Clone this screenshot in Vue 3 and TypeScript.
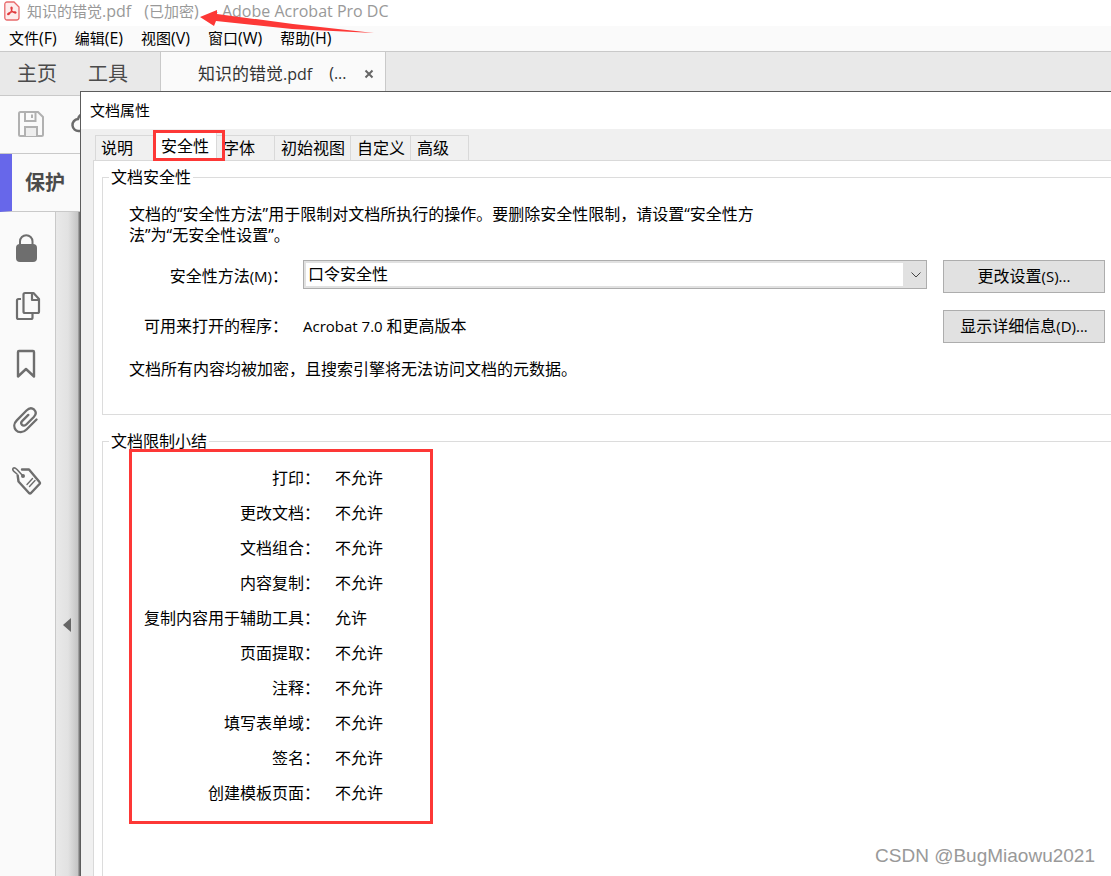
<script setup lang="ts">
import { ref } from 'vue'

interface Restriction {
  label: string
  value: string
}

const menus = [
  { text: '文件', key: '(F)' },
  { text: '编辑', key: '(E)' },
  { text: '视图', key: '(V)' },
  { text: '窗口', key: '(W)' },
  { text: '帮助', key: '(H)' },
]

const tabs = [
  { text: '说明', size: 'first' },
  { text: '安全性', size: 'active' },
  { text: '字体', size: 'mid' },
  { text: '初始视图', size: 'wide' },
  { text: '自定义', size: 'custom' },
  { text: '高级', size: 'mid' },
]

const restrictions: Restriction[] = [
  { label: '打印', value: '不允许' },
  { label: '更改文档', value: '不允许' },
  { label: '文档组合', value: '不允许' },
  { label: '内容复制', value: '不允许' },
  { label: '复制内容用于辅助工具', value: '允许' },
  { label: '页面提取', value: '不允许' },
  { label: '注释', value: '不允许' },
  { label: '填写表单域', value: '不允许' },
  { label: '签名', value: '不允许' },
  { label: '创建模板页面', value: '不允许' },
]

const method = ref('口令安全性')
</script>

<template>
  <div class="window">
    <header class="titlebar">
      <svg class="logo" width="16" height="20" viewBox="0 0 16 20" aria-hidden="true">
        <path d="M3 1h7l5 5v10.500a2.500 2.500 0 0 1-2.500 2.500h-9.500a2.200 2.200 0 0 1-2.200-2.200V3.200A2.200 2.200 0 0 1 3 1z" fill="#fdecec" stroke="#e8696b" stroke-width="1.300" />
        <path d="M7.500 6c1 0 .8 1.600.2 3C6.800 11.200 5.300 13.600 4 13.700c-1.200-.3.200-1.700 1.900-2.300 2-.6 4.200-.8 5.500-.5 1.200.5.600 1.500-.6 1.100C9.300 11.500 7.300 9.500 7 7.500 6.900 6.600 7 6 7.500 6z" fill="none" stroke="#e0383b" stroke-width="1.100" stroke-linejoin="round" />
      </svg>
      <span class="title-name">知识的错觉<span class="title-latin">.pdf</span></span>
      <span class="title-state"><span class="title-latin">(</span>已加密<span class="title-latin">)</span></span>
      <span class="title-latin title-app">- Adobe Acrobat Pro DC</span>
    </header>
    <svg class="arrow" width="180" height="30" viewBox="0 0 180 30" aria-hidden="true">
      <path d="M3 10L20 3v4l76 10 81 9-82-4-76-8-2 5z" fill="#fd3836" />
    </svg>

    <nav class="menubar">
      <button v-for="m in menus" :key="m.text" type="button">{{ m.text }}<span class="menu-key">{{ m.key }}</span></button>
    </nav>

    <div class="docbar">
      <button type="button" class="home">主页</button>
      <button type="button" class="home">工具</button>
      <div class="doctab">
        <span class="doc-name">知识的错觉<span class="doc-latin">.pdf</span></span>
        <span class="doc-latin doc-more">(...</span>
        <button type="button" class="close" aria-label="关闭">
          <svg width="10" height="10" viewBox="0 0 10 10"><path d="M1.500 1.500l7 7m0-7l-7 7" stroke="#666" stroke-width="2" /></svg>
        </button>
      </div>
    </div>

    <div class="toolbar">
      <button type="button" aria-label="保存">
        <svg width="28" height="28" viewBox="0 0 28 28" fill="none" stroke="#b1b1b1" stroke-width="2">
          <path d="M3.500 2h17.500l5 5v17.500a1.500 1.500 0 0 1-1.500 1.500h-21a1.500 1.500 0 0 1-1.500-1.500v-21a1.500 1.500 0 0 1 1.500-1.500z" />
          <path d="M8 2v9h10.500V2M15 4.500v3.500" />
          <path d="M8 26v-9h12v9" fill="#eeeeee" />
        </svg>
      </button>
      <button type="button" aria-label="云">
        <svg width="32" height="28" viewBox="0 0 32 28" fill="none" stroke="#6b6b6b" stroke-width="2.500">
          <path d="M10 21H8a6 6 0 0 1-1-12 8 8 0 0 1 15-1 7 7 0 0 1 3 13z" />
        </svg>
      </button>
    </div>

    <div class="protect">保护</div>

    <div class="workspace">
      <aside class="rail">
        <button type="button" aria-label="安全性">
          <svg width="32" height="32" viewBox="0 0 32 32">
            <rect x="6" y="12" width="21" height="18" rx="4" fill="#6e6e6e" />
            <path d="M10 14V9.500a6.200 6.200 0 0 1 12.500 0V14" fill="none" stroke="#6e6e6e" stroke-width="2" />
          </svg>
        </button>
        <button type="button" aria-label="页面">
          <svg width="32" height="32" viewBox="0 0 32 32" fill="none" stroke="#6e6e6e" stroke-width="2.200" stroke-linejoin="round">
            <path d="M11 9H8.500A1.500 1.500 0 0 0 7 10.500V27.500A1.500 1.500 0 0 0 8.500 29H21a1.500 1.500 0 0 0 1.500-1.500V24" />
            <path d="M15 3h8.500l5.500 6v12.500a1.500 1.500 0 0 1-1.500 1.500H15a1.500 1.500 0 0 1-1.500-1.500v-17A1.500 1.500 0 0 1 15 3z" />
            <path d="M22 3v7h7" />
          </svg>
        </button>
        <button type="button" aria-label="书签">
          <svg width="32" height="32" viewBox="0 0 32 32" fill="none" stroke="#6e6e6e" stroke-width="2.400" stroke-linejoin="round">
            <path d="M9 3h14a1 1 0 0 1 1 1v24.500l-8-7.500-8 7.500V4a1 1 0 0 1 1-1z" />
          </svg>
        </button>
        <button type="button" aria-label="附件">
          <svg width="32" height="32" viewBox="0 0 32 32" fill="none" stroke="#6e6e6e" stroke-width="2.300" stroke-linecap="round">
            <path d="M26.500 13.500L16.500 23.500C13 27 8.500 27 6 24.200c-2.600-3-2-7 .8-9.800L16.500 4.500c2.500-2.500 5.500-2.800 7.700-.8 2.200 2.200 1.800 5-.4 7.300l-7.500 7.500c-1.400 1.400-3.200 1.500-4.300.4-1.200-1.200-1-2.700.3-4l6-6" />
          </svg>
        </button>
        <button type="button" aria-label="标签">
          <svg width="32" height="32" viewBox="0 0 32 32" fill="none" stroke="#6e6e6e" stroke-width="2" stroke-linejoin="round" stroke-linecap="round">
            <path d="M12 5.500h7l10.500 12.500a1.500 1.500 0 0 1 0 2L21 29a1.500 1.500 0 0 1-2 0L8.500 17.500l-.8-6" stroke-width="2.400" />
            <path d="M13 12L7 5.500C5.500 4 4 3.500 3.200 4.200c-.8.8-.2 2.300 1 3.500L7 10" stroke-width="1.600" />
            <circle cx="13" cy="12" r="1" />
            <path d="M17 20.500l5.500-6M19.500 22.500l5.500-6" stroke-width="1.400" />
          </svg>
        </button>
      </aside>
      <div class="gutter">
        <button type="button" aria-label="折叠"></button>
      </div>
    </div>

    <section class="dialog" role="dialog" aria-labelledby="dialog-title">
      <h1 id="dialog-title">文档属性</h1>
      <div class="dialog-body">
        <div class="tabs" role="tablist">
          <button v-for="t in tabs" :key="t.text" type="button" role="tab" :aria-selected="t.size === 'active'" :class="['tab', t.size]">{{ t.text }}</button>
          <div class="mark-tab"></div>
        </div>
        <div class="panel">
          <fieldset class="group security">
            <legend>文档安全性</legend>
            <p class="intro">文档的“安全性方法”用于限制对文档所执行的操作。要删除安全性限制，请设置“安全性方法”为“无安全性设置”。</p>
            <div class="row">
              <label class="name" for="method">安全性方法<span class="latin">(M)</span>：</label>
              <div class="select">
                <select id="method" v-model="method">
                  <option>口令安全性</option>
                  <option>无安全性设置</option>
                </select>
                <svg width="10" height="6" viewBox="0 0 10 6" aria-hidden="true"><path d="M.5.5L5 5 9.500.5" fill="none" stroke="#444" /></svg>
              </div>
              <button type="button" class="push">更改设置<span class="latin">(S)...</span></button>
            </div>
            <div class="row">
              <span class="name">可用来打开的程序：</span>
              <span class="value"><span class="latin">Acrobat 7.0 </span>和更高版本</span>
              <button type="button" class="push">显示详细信息<span class="latin">(D)...</span></button>
            </div>
            <p class="note">文档所有内容均被加密，且搜索引擎将无法访问文档的元数据。</p>
          </fieldset>
          <fieldset class="group summary">
            <legend>文档限制小结</legend>
            <dl>
              <template v-for="r in restrictions" :key="r.label">
                <dt>{{ r.label }}：</dt>
                <dd>{{ r.value }}</dd>
              </template>
            </dl>
          </fieldset>
        </div>
      </div>
      <div class="credit">CSDN @BugMiaowu2021</div>
    </section>
  </div>
</template>

<style>
body {
  margin: 0;
}
</style>

<style scoped>
.window {
  position: relative;
  display: flex;
  flex-direction: column;
  min-height: 100vh;
  overflow: hidden;
  background: #fff;
  color: #000;
  font: 16px/21px "Open Sans", "Noto Sans CJK SC", sans-serif;
}
.window * {
  box-sizing: border-box;
}
button {
  margin: 0;
  padding: 0;
  border: 0;
  background: none;
  color: inherit;
  font: inherit;
  white-space: nowrap;
}
svg {
  display: block;
}
.latin {
  font-size: 15px;
  white-space: pre;
}

.titlebar {
  display: flex;
  align-items: center;
  height: 26px;
  padding: 0 4px 4px;
  color: #999;
  font-size: 15px;
  white-space: nowrap;
}
.title-latin {
  font-size: 16px;
}
.title-name {
  margin-left: 7px;
}
.title-state {
  margin-left: 13px;
}
.title-app {
  margin-left: 14px;
}
.arrow {
  position: absolute;
  left: 197px;
  top: 7px;
}

.menubar {
  display: flex;
  gap: 18px;
  height: 26px;
  padding: 0 9px;
  border-bottom: 1px solid #c9c9c9;
  background: #fafafa;
  font-size: 15px;
}
.menu-key {
  font-size: 16px;
}

.docbar {
  display: flex;
  height: 44px;
  border-bottom: 1px solid #c9c9c9;
  background: #e9e9e9;
}
.home {
  width: 71px;
  padding-left: 17px;
  color: #4b4b4b;
  font-size: 20px;
  text-align: left;
}
.doctab {
  display: flex;
  align-items: center;
  width: 226px;
  margin-left: 18px;
  padding-left: 37px;
  border: solid #c9c9c9;
  border-width: 0 1px;
  background: #fafafa;
  color: #333;
  font-size: 17px;
}
.doc-latin {
  font-size: 16px;
}
.doc-more {
  margin-left: 17px;
}
.close {
  margin-left: 17px;
}

.toolbar {
  display: flex;
  align-items: center;
  gap: 26px;
  height: 58px;
  padding: 0 0 2px 17px;
  border-bottom: 1px solid #c9c9c9;
  background: #fafafa;
}
.protect {
  height: 58px;
  padding-left: 13px;
  border-bottom: 1px solid #c9c9c9;
  border-left: 12px solid #6767ea;
  background: #fafafa;
  color: #4b4b4b;
  font-size: 20px;
  font-weight: 700;
  line-height: 58px;
}
.workspace {
  display: flex;
  flex: 1;
}
.rail {
  display: flex;
  flex-direction: column;
  width: 56px;
  padding-top: 7px;
  border-right: 1px solid #c9c9c9;
  background: #fafafa;
}
.rail button {
  display: flex;
  align-items: center;
  height: 58px;
  padding-left: 10px;
}
.gutter {
  display: flex;
  align-items: center;
  width: 25px;
  padding: 162px 0 0 7px;
  background: linear-gradient(90deg, #e9e9e9, #e2e2e2 12px, #c4c4c4 22px, #777 23px);
}
.gutter button {
  border: solid transparent;
  border-width: 7px 8px 7px 0;
  border-right-color: #666;
}

.dialog {
  position: absolute;
  inset: 91px 0 0 80px;
  display: flex;
  flex-direction: column;
  border: solid #5c5c5c;
  border-width: 1px 0 0 1px;
  background: #f0f0f0;
}
h1 {
  margin: 0;
  padding-left: 9px;
  background: #fff;
  font-size: 15px;
  font-weight: 400;
  line-height: 37px;
}
.dialog-body {
  display: flex;
  flex: 1;
  flex-direction: column;
  padding-left: 12px;
}
.tabs {
  position: relative;
  display: flex;
  align-items: flex-end;
  height: 31px;
  padding-left: 2px;
}
.tab {
  height: 25px;
  padding: 1px 0 0 6px;
  border: solid #d9d9d9;
  border-width: 1px 1px 0 0;
  text-align: left;
}
.first {
  width: 60px;
  padding-left: 5px;
  border-left-width: 1px;
}
.active {
  width: 62px;
  height: 28px;
  padding-bottom: 2px;
  background: #fff;
}
.mid {
  width: 58px;
}
.wide {
  width: 76px;
}
.custom {
  width: 60px;
}
.mark-tab {
  position: absolute;
  left: 60px;
  top: 1px;
  width: 72px;
  height: 31px;
  border: 3px solid #fd3836;
}
.panel {
  display: flex;
  flex: 1;
  flex-direction: column;
  gap: 16px;
  padding: 6px 0 0 8px;
  border: solid #d9d9d9;
  border-width: 1px 0 0 1px;
  background: #fff;
}
.group {
  min-width: 0;
  margin: 0;
  border: 1px solid #dcdcdc;
  border-right: 0;
}
legend {
  padding: 0 2px;
  line-height: 20px;
}
.security {
  padding: 17px 6px 34px;
}
.intro {
  max-width: 640px;
  margin: 0 0 14px 20px;
}
.row {
  display: flex;
  align-items: center;
  height: 33px;
  margin-bottom: 17px;
}
.name {
  width: 179px;
  margin-right: 15px;
  text-align: right;
  white-space: nowrap;
}
.select {
  position: relative;
  flex: 1;
  align-self: flex-start;
}
.select select {
  display: block;
  width: 100%;
  height: 29px;
  padding: 0 24px 0 4px;
  border: 1px solid #adadad;
  border-radius: 0;
  appearance: none;
  background: linear-gradient(#fff, #fff) 2px 2px / calc(100% - 25px) calc(100% - 4px) no-repeat #e1e1e1;
  color: #000;
  font: inherit;
}
.select svg {
  position: absolute;
  right: 6px;
  top: 12px;
  pointer-events: none;
}
.value {
  flex: 1;
}
.push {
  width: 162px;
  height: 33px;
  margin-left: 16px;
  border: 1px solid #adadad;
  background: #e1e1e1;
}
.note {
  margin: -1px 0 0 20px;
}
.summary {
  flex: 1;
  padding: 0 6px;
  border-bottom: 0;
}
dl {
  display: grid;
  grid-template-columns: 188px 1fr;
  column-gap: 15px;
  width: 304px;
  margin: -2px 0 0 20px;
  padding: 9px 0 10px;
  border: 3px solid #fd3836;
  line-height: 35px;
}
dt {
  text-align: right;
  white-space: nowrap;
}
dd {
  margin: 0;
}
.credit {
  position: absolute;
  right: 16px;
  bottom: 8px;
  color: #999;
  font: 19px/24px "Liberation Sans", sans-serif;
}
</style>
